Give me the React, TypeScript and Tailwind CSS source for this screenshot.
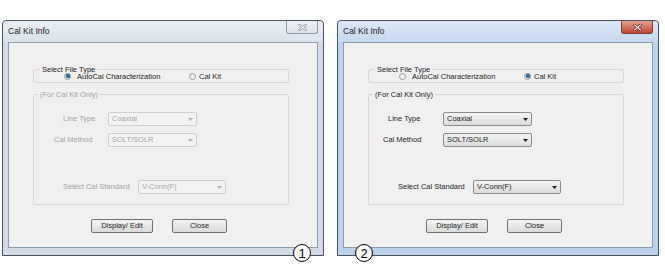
import React from 'react';

type Offsets = { lineType: number; calMethod: number };

function Radio({ checked }: { checked: boolean }) {
  return (
    <span className="w-[7px] h-[7px] rounded-full border border-[#9a9a9a] bg-gradient-to-br from-[#e2e2e2] to-[#fbfbfb] flex items-center justify-center shrink-0">
      {checked && <span className="w-[4px] h-[4px] rounded-full bg-[#2f6f9f] shadow-[0_0_1px_#1c4b73]" />}
    </span>
  );
}

function Arrow({ color }: { color: string }) {
  return (
    <svg width="5" height="3" viewBox="0 0 5 3" className="shrink-0">
      <path d="M0 0H5L2.5 3Z" fill={color} />
    </svg>
  );
}

function Combo({ value, width, disabled }: { value: string; width: string; disabled: boolean }) {
  return (
    <div
      className={`${width} h-[14px] rounded-[2px] border flex items-center justify-between pl-[3px] pr-[3px] ${
        disabled
          ? 'border-[#cfcfcf] bg-[#f3f3f3] text-[#a5a5a5]'
          : 'border-[#8b8b8b] bg-gradient-to-b from-[#f4f4f4] to-[#dcdcdc] text-[#222]'
      }`}
    >
      <span className="leading-[12px]">{value}</span>
      <Arrow color={disabled ? '#b0b0b0' : '#1b1b1b'} />
    </div>
  );
}

function Button({ label, width }: { label: string; width: string }) {
  return (
    <div className={`${width} h-[14px] rounded-[2px] border border-[#707070] bg-gradient-to-b from-[#f4f4f4] to-[#dadada] flex items-center justify-center text-[#222] leading-[12px]`}>
      {label}
    </div>
  );
}

function CloseButton({ active }: { active: boolean }) {
  return (
    <div
      className={`w-[32px] h-[13px] rounded-b-[3px] border border-t-0 flex items-center justify-center ${
        active
          ? 'border-[#7d3a2e] bg-gradient-to-b from-[#e2a091] to-[#c5432c]'
          : 'border-[#8d99a8] bg-gradient-to-b from-[#eef1f5] to-[#dde3ea]'
      }`}
    >
      <svg width="9" height="7" viewBox="0 0 9 7">
        <path d="M1.5 1L7.5 6M7.5 1L1.5 6" stroke={active ? '#5a1f14' : '#8f98a3'} strokeWidth="2.4" strokeLinecap="square" />
        <path d="M1.5 1L7.5 6M7.5 1L1.5 6" stroke={active ? '#ffffff' : '#eef1f5'} strokeWidth="1.1" strokeLinecap="square" />
      </svg>
    </div>
  );
}

function Window({ calKit, offsets, badge, badgeLeft }: { calKit: boolean; offsets: Offsets; badge: string; badgeLeft: string }) {
  const off = !calKit;
  const dim = off ? 'text-[#a3a3a3]' : 'text-[#222]';
  return (
    <div
      className={`relative w-[322px] h-[236px] shrink-0 border border-[#4b525c] rounded-t-[4px] flex flex-col ${
        calKit ? 'bg-[#bcd2eb]' : 'bg-[#d3dce6]'
      }`}
    >
      {/* Title bar */}
      <div
        className={`h-[21px] flex items-start justify-between pl-[5px] pr-[5px] rounded-t-[4px] ${
          calKit ? 'bg-gradient-to-b from-[#dde8f5] to-[#c5d8ee]' : 'bg-gradient-to-b from-[#eaeff4] to-[#dae2eb]'
        }`}
      >
        <span className="text-[8.5px] leading-[21px] text-[#1b1b1b]">Cal Kit Info</span>
        <CloseButton active={calKit} />
      </div>

      {/* Client */}
      <div className="flex-1 mx-[5px] mb-[7px] border border-[#8c9cb0] bg-[#f0f0f0] flex flex-col text-[7.5px]">
        <fieldset className="mt-[22px] ml-[24px] w-[256px] border border-[#d8d8d8] rounded-[2px]">
          <legend className="ml-[6px] px-[2px] leading-[9px] text-[#222]">Select File Type</legend>
          <div className="flex items-center h-[8px] -mt-[2px] mb-[2px] pl-[30px] text-[#222]">
            <div className="w-[125px] flex items-center gap-[6px]">
              <Radio checked={!calKit} />
              <span className="leading-[9px]">AutoCal Characterization</span>
            </div>
            <div className="flex items-center gap-[3px]">
              <Radio checked={calKit} />
              <span className="leading-[9px]">Cal Kit</span>
            </div>
          </div>
        </fieldset>

        <fieldset className="mt-[7px] ml-[24px] w-[256px] h-[115px] border border-[#d8d8d8] rounded-[2px] flex flex-col">
          <legend className={`ml-[4px] px-[2px] leading-[9px] ${dim}`}>(For Cal Kit Only)</legend>
          <div className="flex items-center mt-[13px]">
            <div className={`w-[74px] whitespace-nowrap ${dim}`} style={{ paddingLeft: offsets.lineType }}>
              Line Type
            </div>
            <Combo value="Coaxial" width="w-[89px]" disabled={off} />
          </div>
          <div className="flex items-center mt-[7px]">
            <div className={`w-[74px] whitespace-nowrap ${dim}`} style={{ paddingLeft: offsets.calMethod }}>
              Cal Method
            </div>
            <Combo value="SOLT/SOLR" width="w-[89px]" disabled={off} />
          </div>
          <div className="flex items-center mt-[33px]">
            <div className={`w-[104px] pl-[29px] whitespace-nowrap ${dim}`}>Select Cal Standard</div>
            <Combo value="V-Conn(F)" width="w-[88px]" disabled={off} />
          </div>
        </fieldset>

        <div className="flex mt-[14px] ml-[82px] gap-[19px]">
          <Button label="Display/ Edit" width="w-[62px]" />
          <Button label="Close" width="w-[55px]" />
        </div>
      </div>

      {/* Callout number */}
      <div
        className={`absolute top-[223px] ${badgeLeft} w-[18px] h-[18px] rounded-full border-[1.5px] border-black bg-white flex items-center justify-center text-[13px] leading-none text-black`}
      >
        {badge}
      </div>
    </div>
  );
}

export default function App() {
  return (
    <div className="w-[665px] h-[267px] bg-white flex gap-[13px] pl-[2px] pt-[20px] font-['Liberation_Sans',Arial,sans-serif]">
      <Window calKit={false} offsets={{ lineType: 29, calMethod: 20 }} badge="1" badgeLeft="left-[290px]" />
      <Window calKit={true} offsets={{ lineType: 19, calMethod: 14 }} badge="2" badgeLeft="left-[17px]" />
    </div>
  );
}
